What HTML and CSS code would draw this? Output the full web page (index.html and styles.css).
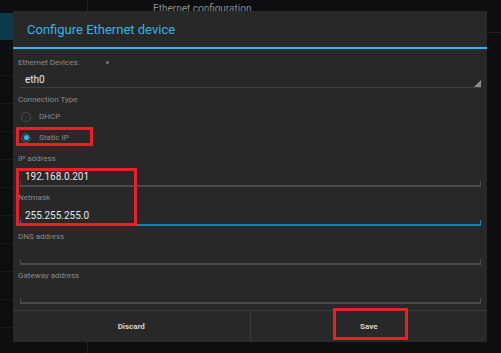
FILE: index.html
```html
<!DOCTYPE html>
<html lang="en">
<head>
  <meta charset="UTF-8">
  <meta name="viewport" content="width=device-width, initial-scale=1.0">
  <title>Configure Ethernet device</title>
  <link rel="stylesheet" href="styles.css">
</head>
<body>
  <div class="app">
    <aside class="nav">
      <div class="nav-item selected"></div>
      <div class="nav-item"></div>
      <div class="nav-item"></div>
      <div class="nav-item"></div>
      <div class="nav-item"></div>
      <div class="nav-item"></div>
      <div class="nav-item"></div>
      <div class="nav-item"></div>
      <div class="nav-item"></div>
      <div class="nav-item"></div>
      <div class="nav-item"></div>
    </aside>
    <main class="pane">
      <div class="pane-title">Ethernet configuration</div>
    </main>
  </div>

  <div class="dialog">
    <div class="dialog-title">Configure Ethernet device</div>
    <div class="dialog-body">
      <div class="label">Ethernet Devices: <span class="dot"></span></div>
      <div class="spinner">eth0<span class="spinner-arrow"></span></div>

      <div class="label">Connection Type</div>
      <div class="radio-group">
        <div class="radio">
          <span class="radio-btn"></span>DHCP
        </div>
        <div class="radio">
          <span class="radio-btn checked"></span>Static IP
        </div>
      </div>

      <div class="label">IP address</div>
      <div class="field">192.168.0.201</div>

      <div class="label">Netmask</div>
      <div class="field focused">255.255.255.0</div>

      <div class="label">DNS address</div>
      <div class="field"></div>

      <div class="label">Gateway address</div>
      <div class="field"></div>
    </div>
    <div class="dialog-buttons">
      <button class="btn">Discard</button>
      <button class="btn">Save</button>
    </div>
  </div>

  <div class="mark mark-static"></div>
  <div class="mark mark-ip"></div>
  <div class="mark mark-save"></div>
</body>
</html>
```

FILE: styles.css
```css
:root {
  --bg: #0d0e10;
  --dialog-bg: #282828;
  --holo: #33b5e5;
  --focus: #1a7fae;
  --label: #8a8a8a;
  --text: #e8e8e8;
  --line: #4a4a4a;
  --mark: #e8202a;
}
body {
  margin: 0;
  background: var(--bg);
  font-family: Roboto, 'Liberation Sans', sans-serif;
  width: 501px;
  height: 353px;
  overflow: hidden;
  position: relative;
}
.app {
  display: flex;
  height: 353px;
}
.nav {
  width: 87px;
  border-right: 1px solid #1d1e21;
  padding-top: 13px;
}
.nav-item {
  height: 27px;
  border-bottom: 1px solid #17181b;
}
.nav-item.selected {
  background: #0d394c;
  border-bottom: 8px solid var(--bg);
}
.pane {
  flex: 1;
}
.pane-title {
  height: 32px;
  border-bottom: 1px solid #1e1f22;
  padding-left: 65px;
  color: #8e8e8e;
  font-size: 10px;
  line-height: 17px;
}

.dialog {
  position: absolute;
  left: 13px;
  top: 11px;
  width: 474px;
  height: 331px;
  background: var(--dialog-bg);
  display: flex;
  flex-direction: column;
}
.dialog-title {
  height: 36px;
  border-bottom: 2px solid var(--holo);
  padding-left: 14px;
  color: var(--holo);
  font-size: 13px;
  line-height: 38px;
}
.dialog-body {
  flex: 1;
  padding: 8px 6px 0 5px;
}
.label {
  height: 12px;
  line-height: 12px;
  font-size: 8px;
  color: var(--label);
}
.dot {
  display: inline-block;
  width: 3px;
  height: 3px;
  border-radius: 50%;
  background: #777;
  margin-left: 24px;
  vertical-align: middle;
}
.spinner {
  position: relative;
  margin: 0 0 6px 2px;
  padding: 3px 0 0 5px;
  height: 15px;
  line-height: 15px;
  font-size: 10px;
  color: var(--text);
  border-bottom: 1px solid #3e3e3e;
}
.spinner-arrow {
  position: absolute;
  right: 0;
  bottom: 0;
  width: 0;
  height: 0;
  border-left: 7px solid transparent;
  border-bottom: 7px solid #8c8c8c;
}
.radio-group {
  margin-bottom: 5px;
}
.radio {
  display: flex;
  align-items: center;
  height: 21px;
  padding-left: 3px;
  font-size: 8px;
  color: var(--label);
}
.radio-btn {
  width: 10px;
  height: 10px;
  box-sizing: border-box;
  border: 1.5px solid #4a4a4a;
  border-radius: 50%;
  margin-right: 8px;
  display: flex;
  align-items: center;
  justify-content: center;
}
.radio-btn.checked {
  background: #3a3a3a;
}
.radio-btn.checked::after {
  content: '';
  width: 5px;
  height: 5px;
  border-radius: 50%;
  background: var(--holo);
}
.field {
  position: relative;
  margin: 0 0 5px 2px;
  padding: 4px 0 0 5px;
  height: 16px;
  line-height: 16px;
  font-size: 10px;
  color: var(--text);
  border-bottom: 2px solid var(--line);
}
.field::before,
.field::after {
  content: '';
  position: absolute;
  bottom: 0;
  width: 1px;
  height: 4px;
  background: var(--line);
}
.field::before { left: 0; }
.field::after { right: 0; }
.field.focused {
  border-bottom-color: var(--focus);
}
.field.focused::before,
.field.focused::after {
  background: var(--focus);
}
.dialog-buttons {
  display: flex;
  height: 31px;
  border-top: 1px solid #3a3a3a;
}
.btn {
  flex: 1;
  background: none;
  border: none;
  color: #d4d4d4;
  font-family: inherit;
  font-size: 8px;
  font-weight: bold;
  padding: 0;
}
.btn + .btn {
  border-left: 1px solid #3a3a3a;
}

.mark {
  position: absolute;
  box-sizing: border-box;
  border: 3px solid var(--mark);
}
.mark-static { left: 16px; top: 127px; width: 77px; height: 19px; }
.mark-ip { left: 16px; top: 168px; width: 121px; height: 58px; }
.mark-save { left: 333px; top: 308px; width: 75px; height: 32px; }
```
